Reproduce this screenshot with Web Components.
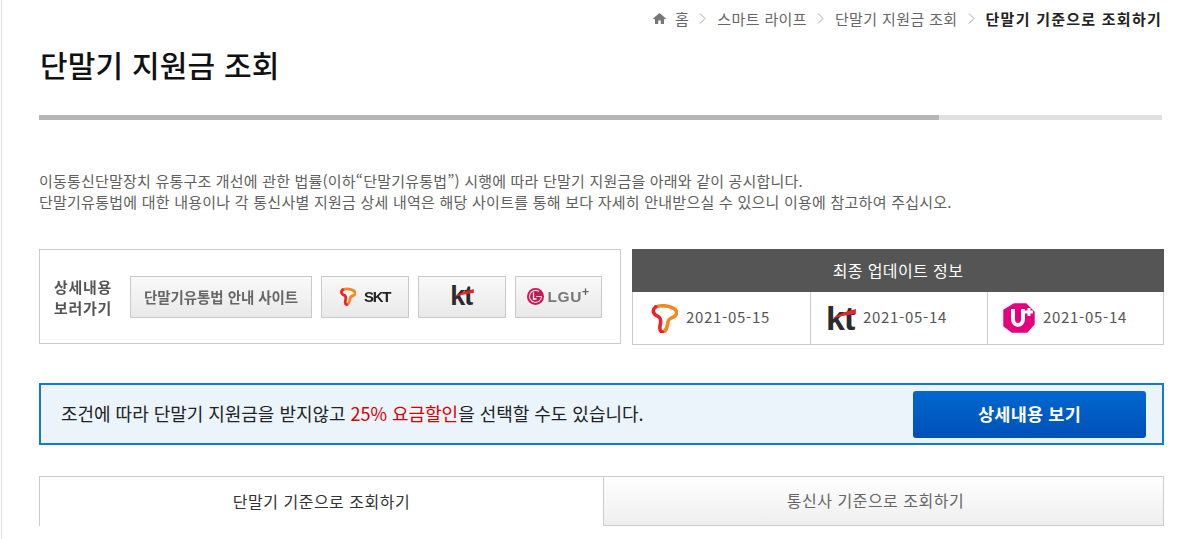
<!DOCTYPE html>
<html lang="ko">
<head>
<meta charset="utf-8">
<title>단말기 지원금 조회</title>
<style>
  html, body { margin: 0; background: #fff; overflow: hidden; }
  body { font-family: "Noto Sans CJK KR", "Noto Sans", sans-serif; height: 539px; }
</style>
</head>
<body>
<support-page>
  <bread-crumb slot="crumb"></bread-crumb>
  <page-title slot="title">단말기 지원금 조회</page-title>
  <intro-text slot="intro"></intro-text>
  <detail-links slot="links"></detail-links>
  <update-info slot="update"></update-info>
  <discount-banner slot="banner"></discount-banner>
  <tab-bar slot="tabs"></tab-bar>
</support-page>

<script>
const FONT = '"Noto Sans CJK KR", "Noto Sans", sans-serif';

const tLogo = (w, h, sw) => `
  <svg width="${w}" height="${h}" viewBox="6 5 29 31" aria-hidden="true">
    <path d="M11 8C18 6 26 7 31 10 35 13 34 17 30 19 26 20 24 22 24 26 23 31 22 35 18 35" fill="none" stroke="#f5871f" stroke-width="${sw}" stroke-linecap="round"/>
    <path d="M11 8C7 11 8 16 13 18 16 19 17 23 16 27 15 31 15 34 18 35" fill="none" stroke="#ec2227" stroke-width="${sw}" stroke-linecap="round"/>
  </svg>`;

// letters stay real text, the red swoosh lies over them
const ktLogo = (size) => `
  <span style="position:relative;display:inline-block;width:.88em;font:700 ${size}px/1 'Liberation Sans',sans-serif;letter-spacing:-.03em;color:#2b2b2b">kt<svg style="position:absolute;left:0;top:.09em;width:.88em;height:.79em" viewBox="0 0 30 27" aria-hidden="true"><path d="M6 15C12 10 22 7 30 5L30 10C22 11 14 12 6 15Z" fill="#e5262b"/></svg></span>`;

class SupportPage extends HTMLElement {
  constructor() {
    super();
    this.attachShadow({ mode: 'open' });
    this.shadowRoot.innerHTML = `
      <style>
        :host { display: block; margin-left: 1px; border-left: 1px solid #ddd; height: 539px; padding: 0 19px 0 37px; width: 1125px; box-sizing: content-box; }
        .row { display: flex; justify-content: space-between; margin-top: 37px; }
        ::slotted([slot=banner]) { margin-top: 38px; }
        ::slotted([slot=tabs]) { margin-top: 31px; }
      </style>
      <slot name="crumb"></slot>
      <slot name="title"></slot>
      <slot name="intro"></slot>
      <div class="row"><slot name="links"></slot><slot name="update"></slot></div>
      <slot name="banner"></slot>
      <slot name="tabs"></slot>`;
  }
}

class BreadCrumb extends HTMLElement {
  constructor() {
    super();
    this.attachShadow({ mode: 'open' });
    const items = ['홈', '스마트 라이프', '단말기 지원금 조회'];
    const sep = `<svg class="sep" width="7" height="11" viewBox="0 0 7 11"><path d="M1 .5 6 5.5 1 10.5" fill="none" stroke="#a5a5a5" stroke-width="1"/></svg>`;
    this.shadowRoot.innerHTML = `
      <style>
        :host { display: flex; justify-content: flex-end; align-items: center; box-sizing: border-box; height: 38px; padding: 0 2px 2px 0; font-size: 15px; color: #666; font-family: ${FONT}; }
        svg.home { margin-right: 9px; }
        .sep { margin: 0 11px 0 10px; }
        b { color: #222; font-weight: 700; letter-spacing: 1.25px; }
        span { letter-spacing: .38px; }
      </style>
      <svg class="home" width="13" height="11" viewBox="0 0 13 11"><path d="M6.5 0 0 5.6 1 6.6 2 5.8V11H5.2V7.4H7.8V11H11V5.8L12 6.6 13 5.6Z" fill="#777"/></svg>
      ${items.map(i => `<span>${i}</span>${sep}`).join('')}
      <b>단말기 기준으로 조회하기</b>`;
  }
}

class PageTitle extends HTMLElement {
  constructor() {
    super();
    this.attachShadow({ mode: 'open' });
    this.shadowRoot.innerHTML = `
      <style>
        :host { display: block; font-family: ${FONT}; }
        h1 { margin: 0; height: 77px; padding: 2px 0 0 1px; box-sizing: border-box; font-size: 30px; line-height: 48px; font-weight: 500; color: #111; letter-spacing: .2px; }
        .bar { height: 5px; width: 1123px; background: linear-gradient(90deg, #b5b5b5 900px, #e0e0e0 900px); }
      </style>
      <h1><slot></slot></h1>
      <div class="bar"></div>`;
  }
}

class IntroText extends HTMLElement {
  constructor() {
    super();
    this.attachShadow({ mode: 'open' });
    this.shadowRoot.innerHTML = `
      <style>
        :host { display: block; margin-top: 50px; font-family: ${FONT}; font-size: 15px; line-height: 21px; color: #606060; letter-spacing: .2px; }
        p { margin: 0; white-space: nowrap; }
        p + p { letter-spacing: .24px; }
      </style>
      <p>이동통신단말장치 유통구조 개선에 관한 법률(이하“단말기유통법”) 시행에 따라 단말기 지원금을 아래와 같이 공시합니다.</p>
      <p>단말기유통법에 대한 내용이나 각 통신사별 지원금 상세 내역은 해당 사이트를 통해 보다 자세히 안내받으실 수 있으니 이용에 참고하여 주십시오.</p>`;
  }
}

class LinkButton extends HTMLElement {
  constructor() {
    super();
    this.attachShadow({ mode: 'open' });
    this.shadowRoot.innerHTML = `
      <style>
        :host { display: flex; align-items: center; justify-content: center; gap: 8px; box-sizing: border-box; height: 42px; border: 1px solid #c9c9c9; background: linear-gradient(#f9f9f9, #e9e9e9); font-family: ${FONT}; }
      </style>
      <slot></slot>`;
  }
}

class DetailLinks extends HTMLElement {
  constructor() {
    super();
    this.attachShadow({ mode: 'open' });
    this.shadowRoot.innerHTML = `
      <style>
        :host { display: flex; align-items: center; box-sizing: border-box; width: 582px; height: 95px; border: 1px solid #ccc; padding-left: 14px; font-family: ${FONT}; }
        .label { width: 76px; font-size: 15px; line-height: 21px; font-weight: 700; color: #555; letter-spacing: .7px; filter: blur(.3px); }
        .site { width: 182px; margin-right: 9px; font-size: 14.5px; font-weight: 700; color: #666; letter-spacing: -.05px; }
        .site span { filter: blur(.3px); }
        .skt { width: 88px; margin-right: 9px; }
        .kt { width: 88px; margin-right: 9px; }
        .lg { width: 87px; gap: 3px; }
        .skt span { font: 700 15px "Liberation Sans", sans-serif; letter-spacing: -1.4px; color: #222; filter: blur(.3px); }
        .lg span { font: 700 15.5px "Liberation Sans", sans-serif; letter-spacing: .6px; color: #777; filter: blur(.3px); }
        .lg sup { font-size: 12px; line-height: 0; color: #666; }
      </style>
      <div class="label">상세내용<br>보러가기</div>
      <link-button class="site"><span>단말기유통법 안내 사이트</span></link-button>
      <link-button class="skt">${tLogo(16, 19, 5)}<span>SKT</span></link-button>
      <link-button class="kt">${ktLogo(27)}</link-button>
      <link-button class="lg">
        <svg width="17" height="17" viewBox="0 0 17 17" aria-hidden="true"><circle cx="8.5" cy="8.5" r="8.5" fill="#c5174f"/><path d="M12 3.5A6 6 0 1 0 14.5 8.5H9" fill="none" stroke="#f6d0dc" stroke-width="1.2"/><path d="M6.5 4.5V11H9.5" fill="none" stroke="#fff" stroke-width="1.3"/></svg>
        <span>LGU<sup>+</sup></span>
      </link-button>`;
  }
}

class UpdateInfo extends HTMLElement {
  constructor() {
    super();
    this.attachShadow({ mode: 'open' });
    this.shadowRoot.innerHTML = `
      <style>
        :host { display: block; width: 532px; font-family: ${FONT}; }
        .head { box-sizing: border-box; height: 43px; padding-bottom: 2px; display: flex; align-items: center; justify-content: center; background: #555; color: #fff; font-size: 16px; letter-spacing: .4px; }
        .cells { display: grid; grid-template-columns: 177px 177px 1fr; height: 53px; box-sizing: border-box; border: 1px solid #ccc; border-top: 0; }
        .cell { display: flex; align-items: center; gap: 8px; padding-left: 18px; font-size: 15px; color: #555; letter-spacing: .7px; }
        .cell + .cell { border-left: 1px solid #ccc; padding-left: 15px; }
        .cell .date { margin-bottom: 3px; }
        .kt-cell { gap: 7px; }
      </style>
      <div class="head">최종 업데이트 정보</div>
      <div class="cells">
        <div class="cell">${tLogo(27, 29, 3.8)}<span class="date">2021-05-15</span></div>
        <div class="cell kt-cell">${ktLogo(34)}<span class="date">2021-05-14</span></div>
        <div class="cell">
          <svg width="32" height="30" viewBox="0 0 32 30" aria-hidden="true"><path d="M1 7 11 1 23 1 31 9 31 21 24 29 9 29 1 23Z" fill="#e6007e" stroke="#e6007e" stroke-width="1.4" stroke-linejoin="round"/><path d="M10 6V16C10 24 20 24 20 16V6" fill="none" stroke="#fff" stroke-width="4"/><path d="M26 5V13M22 9H30" stroke="#fff" stroke-width="3"/></svg>
          <span class="date">2021-05-14</span>
        </div>
      </div>`;
  }
}

class DiscountBanner extends HTMLElement {
  constructor() {
    super();
    this.attachShadow({ mode: 'open' });
    this.shadowRoot.innerHTML = `
      <style>
        :host { display: flex; align-items: center; justify-content: space-between; box-sizing: border-box; width: 1125px; height: 62px; padding: 0 16px 0 20px; border: 2px solid #0f7bd9; background: #ebf3fb; font-family: ${FONT}; }
        p { margin: 0 0 2px; font-size: 18px; color: #222; letter-spacing: -.03px; }
        em { font-style: normal; color: #d80000; }
        a { display: flex; align-items: center; justify-content: center; box-sizing: border-box; width: 233px; height: 47px; padding-bottom: 2px; border-radius: 3px; background: linear-gradient(#0068cf, #0050b8); color: #fff; font-size: 17.5px; font-weight: 700; letter-spacing: .2px; }
      </style>
      <p>조건에 따라 단말기 지원금을 받지않고 <em>25% 요금할인</em>을 선택할 수도 있습니다.</p>
      <a>상세내용 보기</a>`;
  }
}

class TabBar extends HTMLElement {
  constructor() {
    super();
    this.attachShadow({ mode: 'open' });
    this.shadowRoot.innerHTML = `
      <style>
        :host { display: grid; grid-template-columns: 564px 561px; width: 1125px; height: 50px; font-family: ${FONT}; font-size: 16px; }
        div { display: flex; align-items: center; justify-content: center; box-sizing: border-box; padding-bottom: 2px; letter-spacing: .5px; }
        .on { border: 1px solid #ccc; border-bottom: 0; border-right: 0; color: #333; background: #fff; }
        .off { border: 1px solid #ccc; padding-right: 16px; color: #666; background: linear-gradient(#fff, #eee); }
      </style>
      <div class="on">단말기 기준으로 조회하기</div>
      <div class="off">통신사 기준으로 조회하기</div>`;
  }
}

customElements.define('support-page', SupportPage);
customElements.define('bread-crumb', BreadCrumb);
customElements.define('page-title', PageTitle);
customElements.define('intro-text', IntroText);
customElements.define('link-button', LinkButton);
customElements.define('detail-links', DetailLinks);
customElements.define('update-info', UpdateInfo);
customElements.define('discount-banner', DiscountBanner);
customElements.define('tab-bar', TabBar);
</script>
</body>
</html>
